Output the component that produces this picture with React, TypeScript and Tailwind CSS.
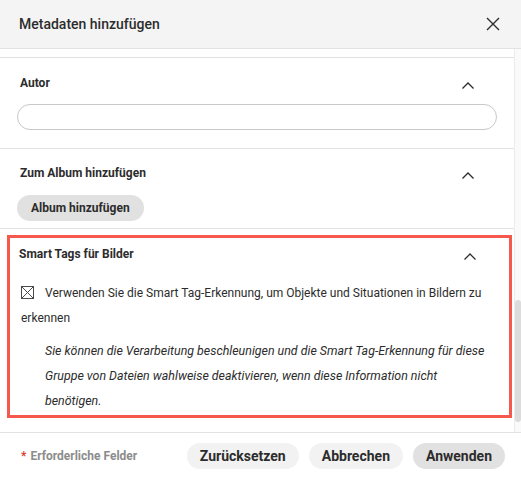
import React from 'react'

function ChevronUp() {
  return (
    <svg width="14" height="9" viewBox="0 0 14 9" fill="none" className="shrink-0">
      <path d="M1.5 7.5 7 2l5.5 5.5" stroke="#2c2c2c" strokeWidth="1.3" />
    </svg>
  )
}

function CloseIcon() {
  return (
    <svg width="14" height="14" viewBox="0 0 14 14" fill="none">
      <path d="M1 1l12 12M13 1 1 13" stroke="#2c2c2c" strokeWidth="1.4" />
    </svg>
  )
}

function CheckboxX() {
  return (
    <svg width="13" height="13" viewBox="0 0 13 13" fill="none" className="shrink-0">
      <rect x="0.5" y="0.5" width="12" height="12" stroke="#4b4b4b" strokeWidth="1" />
      <path d="M0.5 0.5l12 12M12.5 0.5l-12 12" stroke="#4b4b4b" strokeWidth="1" />
    </svg>
  )
}

function SectionHead({ title }: { title: string }) {
  return (
    <div className="flex items-center justify-between pr-[39px]">
      <h3 className="text-[12px] leading-5 font-bold text-[#2c2c2c]">{title}</h3>
      <span className="mt-[5px]">
        <ChevronUp />
      </span>
    </div>
  )
}

export default function App() {
  return (
    <div className="w-[521px] h-[479px] bg-white flex flex-col font-['Roboto',sans-serif] text-[#2c2c2c] overflow-hidden">
      <header className="h-[49px] shrink-0 bg-[#f4f4f4] border-b border-[#e2e2e2] flex items-center justify-between pl-[19px] pr-[21px]">
        <h2 className="text-[14px] font-medium text-[#2c2c2c]">Metadaten hinzufügen</h2>
        <CloseIcon />
      </header>

      <div className="flex-1 min-h-0 flex">
        <div className="flex-1 pt-[8px]">
          <section className="border-t border-[#e2e2e2] pt-[15px] pb-[18px] pl-[20px] pr-0">
            <SectionHead title="Autor" />
            <input className="mt-[11px] -ml-[3px] block w-[480px] h-[26px] rounded-full border border-[#c8c8c8] bg-white outline-none" />
          </section>

          <section className="border-t border-[#e2e2e2] pt-[14px] pb-[7px] pl-[20px]">
            <SectionHead title="Zum Album hinzufügen" />
            <button className="mt-[12px] -ml-[3px] h-[26px] px-[14px] rounded-full bg-[#e1e1e1] text-[12px] font-bold text-[#2c2c2c]">
              Album hinzufügen
            </button>
          </section>

          <section className="border-t border-[#e2e2e2] pt-[6px] pb-[13px]">
            <div className="ml-[7px] w-[505px] border-[3px] border-[#f7584e] pl-[9px] pt-[6px] pb-[2px]">
              <div className="pr-[32px] flex items-center justify-between">
                <h3 className="text-[12px] leading-5 font-bold text-[#2c2c2c]">Smart Tags für Bilder</h3>
                <span className="mt-[5px]">
                  <ChevronUp />
                </span>
              </div>
              <p className="mt-[17px] pl-[2px] pr-[20px] text-[12px] leading-[25px] text-[#2c2c2c]">
                <span className="inline-flex align-[-2px] mr-[11px]">
                  <CheckboxX />
                </span>
                Verwenden Sie die Smart Tag-Erkennung, um Objekte und Situationen in Bildern zu erkennen
              </p>
              <p className="mt-[7px] pl-[26px] pr-[21px] text-[12.4px] leading-[25px] italic text-[#2c2c2c]">
                Sie können die Verarbeitung beschleunigen und die Smart Tag-Erkennung für diese Gruppe von
                Dateien wahlweise deaktivieren, wenn diese Information nicht benötigen.
              </p>
            </div>
          </section>
        </div>

        <div className="w-[7px] shrink-0 border-l border-[#ececec] bg-[#fafafa] flex flex-col pt-[251px]">
          <div className="h-[122px] w-[6px] rounded-full bg-[#dcdcdc]" />
        </div>
      </div>

      <footer className="h-[47px] shrink-0 border-t border-[#e2e2e2] flex items-center justify-between pl-[21px] pr-[16px]">
        <span className="text-[12px] font-bold text-[#8c8c8c]">
          <span className="text-[#e0382b] mr-[4px]">*</span>Erforderliche Felder
        </span>
        <div className="flex gap-[10px]">
          <button className="h-[26px] px-[13px] rounded-full bg-[#f2f2f2] text-[14px] font-bold text-[#2c2c2c]">
            Zurücksetzen
          </button>
          <button className="h-[26px] px-[13px] rounded-full bg-[#f2f2f2] text-[14px] font-bold text-[#2c2c2c]">
            Abbrechen
          </button>
          <button className="h-[26px] px-[13px] rounded-full bg-[#e1e1e1] text-[14px] font-bold text-[#2c2c2c]">
            Anwenden
          </button>
        </div>
      </footer>
    </div>
  )
}
